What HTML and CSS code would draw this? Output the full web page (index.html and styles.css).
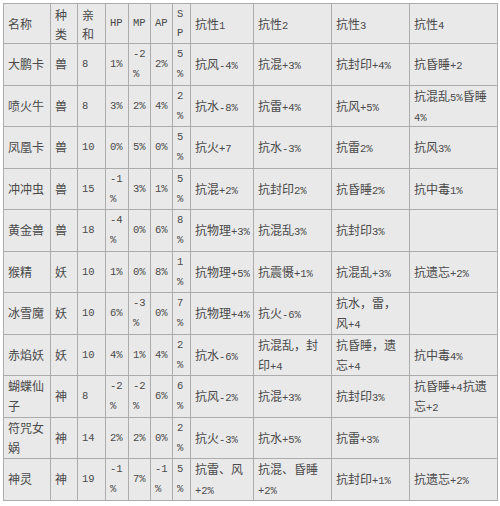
FILE: index.html
```html
<!DOCTYPE html>
<html lang="zh-CN">
<head>
<meta charset="utf-8">
<title>宠物属性表</title>
<link rel="stylesheet" href="styles.css">
</head>
<body>
<table class="pets">
  <colgroup>
    <col class="c-name"><col class="c-kind"><col class="c-aff"><col class="c-hp"><col class="c-mp"><col class="c-ap"><col class="c-sp"><col class="c-r1"><col class="c-r2"><col class="c-r3"><col class="c-r4">
  </colgroup>
  <tr class="head">
    <td>名称</td><td>种类</td><td>亲和</td><td class="n">HP</td><td class="n">MP</td><td class="n">AP</td><td class="n">SP</td>
    <td>抗性<span class="a">1</span></td><td>抗性<span class="a">2</span></td><td>抗性<span class="a">3</span></td><td>抗性<span class="a">4</span></td>
  </tr>
  <tr>
    <td>大鹏卡</td><td>兽</td><td class="n">8</td><td class="n">1%</td><td class="n">-2%</td><td class="n">2%</td><td class="n">5%</td>
    <td>抗风<span class="a">-4%</span></td><td>抗混<span class="a">+3%</span></td><td>抗封印<span class="a">+4%</span></td><td>抗昏睡<span class="a">+2</span></td>
  </tr>
  <tr>
    <td>喷火牛</td><td>兽</td><td class="n">8</td><td class="n">3%</td><td class="n">2%</td><td class="n">4%</td><td class="n">2%</td>
    <td>抗水<span class="a">-8%</span></td><td>抗雷<span class="a">+4%</span></td><td>抗风<span class="a">+5%</span></td><td>抗混乱<span class="a">5%</span>昏睡<span class="a">4%</span></td>
  </tr>
  <tr>
    <td>凤凰卡</td><td>兽</td><td class="n">10</td><td class="n">0%</td><td class="n">5%</td><td class="n">0%</td><td class="n">5%</td>
    <td>抗火<span class="a">+7</span></td><td>抗水<span class="a">-3%</span></td><td>抗雷<span class="a">2%</span></td><td>抗风<span class="a">3%</span></td>
  </tr>
  <tr>
    <td>冲冲虫</td><td>兽</td><td class="n">15</td><td class="n">-1%</td><td class="n">3%</td><td class="n">1%</td><td class="n">5%</td>
    <td>抗混<span class="a">+2%</span></td><td>抗封印<span class="a">2%</span></td><td>抗昏睡<span class="a">2%</span></td><td>抗中毒<span class="a">1%</span></td>
  </tr>
  <tr>
    <td>黄金兽</td><td>兽</td><td class="n">18</td><td class="n">-4%</td><td class="n">0%</td><td class="n">6%</td><td class="n">8%</td>
    <td>抗物理<span class="a">+3%</span></td><td>抗混乱<span class="a">3%</span></td><td>抗封印<span class="a">3%</span></td><td></td>
  </tr>
  <tr>
    <td>猴精</td><td>妖</td><td class="n">10</td><td class="n">1%</td><td class="n">0%</td><td class="n">8%</td><td class="n">1%</td>
    <td>抗物理<span class="a">+5%</span></td><td>抗震慑<span class="a">+1%</span></td><td>抗混乱<span class="a">+3%</span></td><td>抗遗忘<span class="a">+2%</span></td>
  </tr>
  <tr>
    <td>冰雪魔</td><td>妖</td><td class="n">10</td><td class="n">6%</td><td class="n">-3%</td><td class="n">0%</td><td class="n">7%</td>
    <td>抗物理<span class="a">+4%</span></td><td>抗火<span class="a">-6%</span></td><td>抗水，雷，风<span class="a">+4</span></td><td></td>
  </tr>
  <tr>
    <td>赤焰妖</td><td>妖</td><td class="n">10</td><td class="n">4%</td><td class="n">1%</td><td class="n">4%</td><td class="n">2%</td>
    <td>抗水<span class="a">-6%</span></td><td>抗混乱，封印<span class="a">+4</span></td><td>抗昏睡，遗忘<span class="a">+4</span></td><td>抗中毒<span class="a">4%</span></td>
  </tr>
  <tr>
    <td>蝴蝶仙子</td><td>神</td><td class="n">8</td><td class="n">-2%</td><td class="n">-2%</td><td class="n">6%</td><td class="n">6%</td>
    <td>抗风<span class="a">-2%</span></td><td>抗混<span class="a">+3%</span></td><td>抗封印<span class="a">3%</span></td><td>抗昏睡<span class="a">+4</span>抗遗忘<span class="a">+2</span></td>
  </tr>
  <tr>
    <td>符咒女娲</td><td>神</td><td class="n">14</td><td class="n">2%</td><td class="n">2%</td><td class="n">0%</td><td class="n">2%</td>
    <td>抗火<span class="a">-3%</span></td><td>抗水<span class="a">+5%</span></td><td>抗雷<span class="a">+3%</span></td><td></td>
  </tr>
  <tr>
    <td>神灵</td><td>神</td><td class="n">19</td><td class="n">-1%</td><td class="n">7%</td><td class="n">-1%</td><td class="n">5%</td>
    <td>抗雷、风<span class="a">+2%</span></td><td>抗混、昏睡<span class="a">+2%</span></td><td>抗封印<span class="a">+1%</span></td><td>抗遗忘<span class="a">+2%</span></td>
  </tr>
</table>
</body>
</html>
```

FILE: styles.css
```css
html {
  background: #ffffff;
}

body {
  margin: 0;
  padding: 3px 0 0 3px;
}

.pets {
  border-collapse: collapse;
  table-layout: fixed;
  width: 494px;
  background: #e9e9e9;
  font-family: "Noto Sans CJK SC", "Liberation Mono", sans-serif;
  font-size: 12px;
  color: #4a4a4a;
}

.pets td {
  border: 1px solid #acacac;
  padding: 0 2px 0 4px;
  line-height: 20px;
  vertical-align: middle;
  overflow-wrap: anywhere;
}

.pets tr {
  height: 41.5px;
}

.pets tr.head {
  height: 40px;
}

.pets tr.head td {
  line-height: 19px;
}

.pets .n,
.pets .a {
  font-family: "Liberation Mono", monospace;
  font-size: 10.5px;
}

.pets .a {
  line-height: 11px;
}

.c-name { width: 47px; }
.c-kind { width: 27px; }
.c-aff { width: 28px; }
.c-hp { width: 23px; }
.c-mp { width: 22px; }
.c-ap { width: 22px; }
.c-sp { width: 18px; }
.c-r1 { width: 63px; }
.c-r2 { width: 78px; }
.c-r3 { width: 78px; }
.c-r4 { width: 88px; }
```
